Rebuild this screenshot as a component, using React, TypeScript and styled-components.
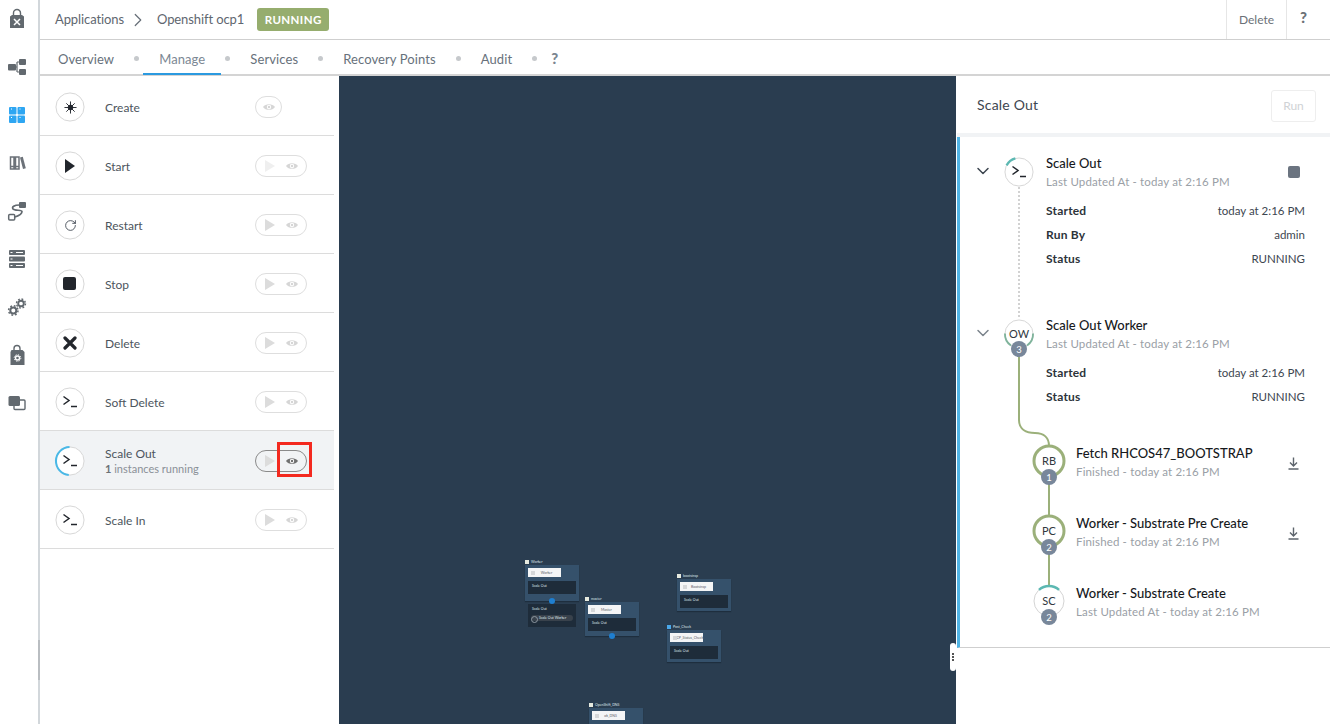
import React from 'react';
import styled, {createGlobalStyle} from 'styled-components';
import {ChevronDown, ChevronRight, RotateCw} from 'lucide-react';

const GlobalStyle = createGlobalStyle`
  html, body {
    margin: 0;
    height: 724px;
    overflow: hidden;
    background: #fff;
    font-family: Lato, "Open Sans", sans-serif;
    color: #3d4650;
  }
  * { box-sizing: border-box; }
`;

const arc = (r: number, from: number, to: number, c = 16) => {
    const pt = (a: number) => {
        const rad = ((a - 90) * Math.PI) / 180;
        return `${(c + r * Math.cos(rad)).toFixed(2)} ${(c + r * Math.sin(rad)).toFixed(2)}`;
    };
    return `M${pt(from)} A${r} ${r} 0 ${to - from > 180 ? 1 : 0} 1 ${pt(to)}`;
};

const Ring = ({arcs = [], color = '#5cb8b2', width = 2, full}: {arcs?: [number, number][]; color?: string; width?: number; full?: string}) => (
    <RingSvg viewBox="0 0 32 32">
        <circle cx="16" cy="16" r="15" fill="#fff" stroke={full || '#d4d4d4'} strokeWidth={full ? 3 : 1}/>
        {arcs.map(([a, b]) => <path key={a} d={arc(15, a, b)} fill="none" stroke={color} strokeWidth={width}/>)}
    </RingSvg>
);

const Terminal = () => (
    <svg width="16" height="14" viewBox="0 0 16 14" fill="none" stroke="#22262c" strokeWidth="1.5">
        <path d="M1.5 1.5 L7 5.5 L1.5 9.5"/>
        <path d="M9 11.5 H15"/>
    </svg>
);

const CreateIcon = () => (
    <svg width="13" height="13" viewBox="0 0 14 14" stroke="#22262c" strokeWidth="1" fill="#22262c">
        <circle cx="7" cy="7" r="2.6"/>
        <path d="M7 0.500v13M0.500 7h13M2.500 2.500l9 9M11.500 2.500l-9 9"/>
    </svg>
);

const PlayGlyph = () => <svg width="10" height="14" viewBox="0 0 10 14"><path d="M0 0 L10 7 L0 14Z" fill="#22262c"/></svg>;
const StopGlyph = () => <svg width="14" height="14" viewBox="0 0 14 14"><rect width="13" height="13" rx="2" fill="#22262c"/></svg>;
const CrossGlyph = () => (
    <svg width="14" height="14" viewBox="0 0 14 14" stroke="#22262c" strokeWidth="3.2" strokeLinecap="round">
        <path d="M2 2 L12 12 M12 2 L2 12"/>
    </svg>
);

const EyeGlyph = ({color}: {color: string}) => (
    <svg width="12" height="8" viewBox="0 0 12 8">
        <path d="M0 4 C2.5 0.2 9.5 0.2 12 4 C9.5 7.8 2.5 7.8 0 4Z" fill={color}/>
        <circle cx="6" cy="4" r="2.2" fill="#fff"/>
        <circle cx="6" cy="4" r="1.2" fill={color}/>
    </svg>
);

const navIcons = [
    <svg viewBox="0 0 24 24" key="bag"><path d="M8.500 9V6a3.500 3.500 0 0 1 7 0v3" fill="none" stroke="#62696f" strokeWidth="1.400"/><path d="M7 8h10l2 1.500V21H5V9.500z" fill="#62696f"/><path d="M9 12l6 6M15 12l-6 6" stroke="#fff" strokeWidth="1.500"/></svg>,
    <svg viewBox="0 0 24 24" key="tree"><path d="M8 12h4M12 7v10M12 7h4M12 17h4" stroke="#62696f" strokeWidth="1.200" fill="none"/><rect x="3" y="9" width="8" height="6.500" rx="1" fill="#62696f"/><rect x="14" y="4" width="7" height="6" rx="1" fill="#62696f"/><rect x="14" y="14" width="7" height="6" rx="1" fill="#62696f"/></svg>,
    <svg viewBox="0 0 24 24" key="apps"><rect x="4" y="4" width="7.500" height="7.500" rx="1" fill="#2ea6f2"/><rect x="12.500" y="4" width="7.500" height="7.500" rx="1" fill="#2ea6f2"/><rect x="4" y="12.500" width="7.500" height="7.500" rx="1" fill="#2ea6f2"/><rect x="12.500" y="12.500" width="7.500" height="7.500" rx="1" fill="#2ea6f2"/><path d="M6 6h1M14.500 6h1M6 14.500h1M14.500 14.500h1" stroke="#fff"/></svg>,
    <svg viewBox="0 0 24 24" key="lib"><path d="M5.500 6h3.500v12H5.500zM10.500 6h3.500v12h-3.500z" fill="none" stroke="#6c7279" strokeWidth="1.500"/><path d="M15 6.500l2.800-.8 3 11.500-2.800.8z" fill="#6c7279"/><path d="M5 15.500h9" stroke="#6c7279" strokeWidth="1.500"/></svg>,
    <svg viewBox="0 0 24 24" key="route"><rect x="14" y="3" width="7" height="6" rx="1" fill="#62696f"/><rect x="3.700" y="15.500" width="6" height="5.500" rx="1" fill="none" stroke="#62696f" strokeWidth="1.500"/><path d="M14.500 6C9 6 6.500 8 8 10C9.500 12 17 10.500 17 12.500C17 15 13 17 10 18" fill="none" stroke="#62696f" strokeWidth="1.700"/></svg>,
    <svg viewBox="0 0 24 24" key="server"><rect x="4" y="3" width="16" height="5" rx="1" fill="#62696f"/><rect x="4" y="9.500" width="16" height="5" rx="1" fill="#62696f"/><rect x="4" y="16" width="16" height="5" rx="1" fill="#62696f"/><path d="M5.500 5.500h2M5.500 12h2M5.500 18.500h2M11 5.500h7M11 18.500h7" stroke="#fff" strokeWidth="1"/></svg>,
    <svg viewBox="0 0 24 24" key="gears"><circle cx="8.300" cy="15.500" r="3" fill="none" stroke="#62696f" strokeWidth="2"/><circle cx="8.300" cy="15.500" r="4.700" fill="none" stroke="#62696f" strokeWidth="1.500" strokeDasharray="1.800 1.890"/><circle cx="16" cy="8.500" r="2.800" fill="none" stroke="#62696f" strokeWidth="1.900"/><circle cx="16" cy="8.500" r="4.500" fill="none" stroke="#62696f" strokeWidth="1.400" strokeDasharray="1.800 1.730"/></svg>,
    <svg viewBox="0 0 24 24" key="bagcog"><path d="M9 7V5.500a3 3 0 0 1 6 0V7" fill="none" stroke="#62696f" strokeWidth="1.400"/><path d="M6.500 7h11l2 2v13h-14V9z" fill="#62696f"/><circle cx="12.500" cy="15" r="2" fill="none" stroke="#fff" strokeWidth="1.400"/><circle cx="12.500" cy="15" r="3.300" fill="none" stroke="#fff" strokeWidth="1" strokeDasharray="1.300 1.290"/></svg>,
    <svg viewBox="0 0 24 24" key="win"><rect x="9" y="9" width="11" height="9.500" rx="1" fill="#fff" stroke="#62696f" strokeWidth="1.400"/><rect x="3.500" y="5" width="11.500" height="10" rx="1.500" fill="#62696f"/></svg>,
];

type Action = {
    name: string;
    icon: React.ReactNode;
    noPlay?: boolean;
    active?: boolean;
};

const actions: Action[] = [
    {name: 'Create', icon: <CreateIcon/>, noPlay: true},
    {name: 'Start', icon: <PlayGlyph/>},
    {name: 'Restart', icon: <RotateCw size={13} color="#3d4650" strokeWidth={1.600}/>},
    {name: 'Stop', icon: <StopGlyph/>},
    {name: 'Delete', icon: <CrossGlyph/>},
    {name: 'Soft Delete', icon: <Terminal/>},
    {name: 'Scale Out', icon: <Terminal/>, active: true},
    {name: 'Scale In', icon: <Terminal/>},
];

const tabs = ['Overview', 'Manage', 'Services', 'Recovery Points', 'Audit'];

const DownloadIcon = () => (
    <svg width="11" height="13" viewBox="0 0 11 13" fill="none" stroke="#5d646c" strokeWidth="1.400">
        <path d="M5.500 0.500V8.500M2 5.500l3.500 3.500 3.500-3.500M0.500 12h10"/>
    </svg>
);

const steps = [
    {code: 'RB', count: 1, title: 'Fetch RHCOS47_BOOTSTRAP', sub: 'Finished - today at 2:16 PM', done: true},
    {code: 'PC', count: 2, title: 'Worker - Substrate Pre Create', sub: 'Finished - today at 2:16 PM', done: true},
    {code: 'SC', count: 2, title: 'Worker - Substrate Create', sub: 'Last Updated At - today at 2:16 PM', done: false},
];

type CanvasNode = {
    x: number;
    y: number;
    label: string;
    head: string;
    blue?: boolean;
    height?: number;
    dot?: boolean;
    cut?: boolean;
};

const nodes: CanvasNode[] = [
    {x: 525, y: 558, label: 'Worker', head: 'Worker', dot: true, height: 36},
    {x: 585, y: 595, label: 'master', head: 'Master', dot: true, height: 34},
    {x: 677, y: 572, label: 'bootstrap', head: 'Bootstrap', height: 32},
    {x: 667, y: 623, label: 'Post_Check', head: 'OCP_Status_Check', blue: true, height: 32},
    {x: 589, y: 701, label: 'OpenShift_DNS', head: 'ok_DNS', height: 32, cut: true},
];

export default function App() {
    return (
        <Page>
            <GlobalStyle/>
            <Sidebar>
                {navIcons.map((icon, i) => <NavIcon key={i}>{icon}</NavIcon>)}
                <SideNotch/>
            </Sidebar>
            <Main>
                <TopBar>
                    <Crumb>Applications</Crumb>
                    <ChevronRight size={22} color="#666e77" strokeWidth={1.300}/>
                    <Crumb>Openshift ocp1</Crumb>
                    <StatusBadge>RUNNING</StatusBadge>
                    <TopAction>Delete</TopAction>
                    <HelpAction>?</HelpAction>
                </TopBar>
                <TabBar>
                    {tabs.map(tab => (
                        <React.Fragment key={tab}>
                            <Tab $active={tab === 'Manage'}>{tab}</Tab>
                            <TabDot/>
                        </React.Fragment>
                    ))}
                    <TabHelp>?</TabHelp>
                </TabBar>
                <Body>
                    <ActionList>
                        {actions.map(a => (
                            <ActionRow key={a.name} $active={a.active}>
                                <CircleIcon>
                                    <Ring arcs={a.active ? [[185, 358]] : []} color="#4ab8e6" width={2.200}/>
                                    <IconInner>{a.icon}</IconInner>
                                </CircleIcon>
                                <ActionText $twoLines={a.active}>
                                    <ActionName>{a.name}</ActionName>
                                    {a.active && <ActionSub><b>1</b> instances running</ActionSub>}
                                </ActionText>
                                <Pill $active={a.active} $short={a.noPlay}>
                                    {!a.noPlay && (
                                        <svg width="10" height="12" viewBox="0 0 10 12">
                                            <path d="M0 0 L10 6 L0 12Z" fill={a.name === 'Start' ? '#efefef' : '#dcdcdc'}/>
                                        </svg>
                                    )}
                                    <EyeGlyph color={a.active ? '#707070' : '#d6d6d6'}/>
                                    {a.active && <Highlight/>}
                                </Pill>
                            </ActionRow>
                        ))}
                    </ActionList>
                    <Canvas>
                        {nodes.map(n => (
                            <NodeWrap key={n.label} $x={n.x - 339} $y={n.y - 76}>
                                <NodeLabel>
                                    <NodeCheck $blue={n.blue}/>
                                    {n.label}
                                </NodeLabel>
                                <NodeBox $h={n.height || 32}>
                                    <NodeHead>{n.head}</NodeHead>
                                    <NodeDark>{!n.cut && 'Scale Out'}</NodeDark>
                                    {n.dot && <NodeDot/>}
                                </NodeBox>
                                {n.label === 'Worker' && (
                                    <NodeExtra>
                                        Scale Out
                                        <NodeTask>Scale Out Worker</NodeTask>
                                    </NodeExtra>
                                )}
                            </NodeWrap>
                        ))}
                    </Canvas>
                    <RightPanel>
                        <Grip>
                            <i/><i/><i/>
                        </Grip>
                        <PanelHead>
                            <PanelTitle>Scale Out</PanelTitle>
                            <RunButton>Run</RunButton>
                        </PanelHead>
                        <Timeline>
                            <Connectors width="370" height="510" fill="none">
                                <path d="M59 50V181" stroke="#c4c4c4" strokeWidth="1.500" strokeDasharray="2 2"/>
                                <path d="M59 218V283C59 292 66 296 75 296C84 296 89 301 89 309V455" stroke="#9bb07a" strokeWidth="2"/>
                            </Connectors>
                            <Stage>
                                <StageHead>
                                    <Caret><ChevronDown size={20} color="#3d4650" strokeWidth={1.800}/></Caret>
                                    <StageCircle>
                                        <Ring arcs={[[298, 345]]} width={2.500}/>
                                        <IconInner><Terminal/></IconInner>
                                    </StageCircle>
                                    <StageText>
                                        <StageTitle>Scale Out</StageTitle>
                                        <StageSub>Last Updated At - today at 2:16 PM</StageSub>
                                    </StageText>
                                    <StopButton/>
                                </StageHead>
                                <Details>
                                    <DetailRow><b>Started</b><span>today at 2:16 PM</span></DetailRow>
                                    <DetailRow><b>Run By</b><span>admin</span></DetailRow>
                                    <DetailRow><b>Status</b><span>RUNNING</span></DetailRow>
                                </Details>
                            </Stage>
                            <Stage>
                                <StageHead>
                                    <Caret><ChevronDown size={20} color="#7c848c" strokeWidth={1.800}/></Caret>
                                    <StageCircle>
                                        <Ring arcs={[[215, 272], [88, 145]]} color="#7fb39b"/>
                                        <IconInner><Code>OW</Code></IconInner>
                                        <CountBadge>3</CountBadge>
                                    </StageCircle>
                                    <StageText>
                                        <StageTitle>Scale Out Worker</StageTitle>
                                        <StageSub>Last Updated At - today at 2:16 PM</StageSub>
                                    </StageText>
                                </StageHead>
                                <Details>
                                    <DetailRow><b>Started</b><span>today at 2:16 PM</span></DetailRow>
                                    <DetailRow><b>Status</b><span>RUNNING</span></DetailRow>
                                </Details>
                            </Stage>
                            <Steps>
                                {steps.map(s => (
                                    <Step key={s.code}>
                                        <StepCircle>
                                            {s.done ? <Ring full="#9bb07a"/> : <Ring arcs={[[318, 402]]} width={2.500}/>}
                                            <IconInner><Code>{s.code}</Code></IconInner>
                                            <CountBadge>{s.count}</CountBadge>
                                        </StepCircle>
                                        <StageText>
                                            <StageTitle>{s.title}</StageTitle>
                                            <StageSub>{s.sub}</StageSub>
                                        </StageText>
                                        {s.done && <StepDownload><DownloadIcon/></StepDownload>}
                                    </Step>
                                ))}
                            </Steps>
                        </Timeline>
                    </RightPanel>
                </Body>
            </Main>
        </Page>
    );
}

const Page = styled.div`
  display: flex;
  width: 1330px;
  height: 724px;
  overflow: hidden;
`;

const Sidebar = styled.nav`
  position: relative;
  flex: 0 0 40px;
  display: flex;
  flex-direction: column;
  gap: 24px;
  padding: 7px 0 0 5px;
  border-right: 2px solid #d2d7db;
`;

const NavIcon = styled.div`
  width: 24px;
  height: 24px;
  svg {
    display: block;
    width: 24px;
    height: 24px;
  }
`;

const SideNotch = styled.span`
  position: absolute;
  top: 640px;
  right: -2px;
  width: 2px;
  height: 40px;
  background: #b9bdc1;
`;

const Main = styled.div`
  flex: 1;
  min-width: 0;
  display: flex;
  flex-direction: column;
`;

const TopBar = styled.header`
  height: 40px;
  display: flex;
  align-items: center;
  padding-left: 15px;
  border-bottom: 1px solid #cfcfcf;
  svg {
    margin: 0 8px 0 3px;
  }
`;

const Crumb = styled.span`
  font-size: 13px;
  letter-spacing: -0.100px;
  color: #5f6770;
  padding-bottom: 1px;
`;

const StatusBadge = styled.span`
  margin-left: 13px;
  width: 72px;
  height: 23px;
  display: flex;
  align-items: center;
  justify-content: center;
  background: #96ad6e;
  border-radius: 3px;
  color: #fff;
  font-size: 11.500px;
  font-weight: 700;
  letter-spacing: 0.400px;
`;

const TopAction = styled.span`
  margin-left: auto;
  width: 60px;
  height: 39px;
  display: flex;
  align-items: center;
  justify-content: center;
  border-left: 1px solid #e6e6e6;
  font-size: 12px;
  color: #6b7177;
`;

const HelpAction = styled.span`
  width: 44px;
  height: 39px;
  display: flex;
  align-items: center;
  justify-content: center;
  border-left: 1px solid #e6e6e6;
  font-size: 15px;
  font-weight: 900;
  color: #6b7177;
  padding: 0 10px 5px 0;
`;

const TabBar = styled.div`
  height: 36px;
  display: flex;
  align-items: center;
  border-bottom: 2px solid #d4d4d4;
  padding-left: 2px;
`;

const Tab = styled.span<{$active?: boolean}>`
  position: relative;
  height: 34px;
  display: flex;
  align-items: center;
  padding: 3px 16px 0;
  font-size: 13px;
  letter-spacing: 0.100px;
  color: ${p => (p.$active ? '#7c8894' : '#67717b')};
  ${p => p.$active && `
    &::after {
      content: '';
      position: absolute;
      left: 0;
      right: 0;
      bottom: -1px;
      height: 2px;
      background: #2b9ae0;
    }
  `}
`;

const TabDot = styled.i`
  width: 5px;
  height: 5px;
  margin: 2px 4px 0;
  border-radius: 50%;
  background: #c6c9cc;
`;

const TabHelp = styled.span`
  margin-left: 10px;
  padding-top: 1px;
  font-size: 15px;
  font-weight: 900;
  color: #7b8590;
`;

const Body = styled.div`
  flex: 1;
  min-height: 0;
  display: flex;
`;

const ActionList = styled.div`
  flex: 0 0 299px;
  padding: 1px 5px 0 0;
`;

const ActionRow = styled.div<{$active?: boolean}>`
  height: 59px;
  display: flex;
  align-items: center;
  padding: 2px 0 0 15px;
  border-bottom: 1px solid #dcdcdc;
  background: ${p => (p.$active ? '#f1f3f5' : '#fff')};
`;

const CircleIcon = styled.div`
  position: relative;
  flex: 0 0 30px;
  height: 30px;
`;

const RingSvg = styled.svg`
  position: absolute;
  inset: 0;
  width: 100%;
  height: 100%;
  overflow: visible;
`;

const IconInner = styled.div`
  position: absolute;
  inset: 0;
  display: flex;
  align-items: center;
  justify-content: center;
`;

const ActionText = styled.div<{$twoLines?: boolean}>`
  flex: 0 0 150px;
  margin: ${p => (p.$twoLines ? '-1px' : '0')} 0 0 20px;
  padding-top: ${p => (p.$twoLines ? '0' : '1px')};
`;

const ActionName = styled.div`
  font-size: 12px;
  line-height: 15px;
  color: #4d555d;
`;

const ActionSub = styled.div`
  font-size: 11px;
  line-height: 15px;
  color: #8a9097;
  b {
    color: #6b7177;
  }
`;

const Pill = styled.div<{$active?: boolean; $short?: boolean}>`
  position: relative;
  width: ${p => (p.$short ? '27px' : '52px')};
  height: 22px;
  display: flex;
  align-items: center;
  justify-content: ${p => (p.$short ? 'center' : 'space-between')};
  padding: 0 ${p => (p.$short ? '0' : '8px')} 0 ${p => (p.$short ? '0' : '9px')};
  border: 1px solid ${p => (p.$active ? '#8a8a8a' : '#dedede')};
  border-radius: 11px;
`;

const Highlight = styled.span`
  position: absolute;
  left: 21px;
  top: -9px;
  width: 35px;
  height: 35px;
  border: 3px solid #f3291f;
`;

const Canvas = styled.div`
  position: relative;
  flex: 0 0 617px;
  overflow: hidden;
  background: #2a3d50;
`;

const NodeWrap = styled.div<{$x: number; $y: number}>`
  position: absolute;
  left: ${p => p.$x}px;
  top: ${p => p.$y}px;
  width: 54px;
  font-size: 3.500px;
  color: #dfe5ea;
`;

const NodeLabel = styled.div`
  display: flex;
  align-items: center;
  gap: 2px;
  height: 7px;
`;

const NodeCheck = styled.i<{$blue?: boolean}>`
  width: 4px;
  height: 4px;
  background: ${p => (p.$blue ? '#4aa8ea' : '#e6eadf')};
`;

const NodeBox = styled.div<{$h: number}>`
  position: relative;
  height: ${p => p.$h}px;
  padding: 3px;
  background: #35516b;
  box-shadow: 0 1px 1px rgba(10, 20, 30, 0.35);
`;

const NodeHead = styled.div`
  position: relative;
  width: 33px;
  height: 9px;
  display: flex;
  align-items: center;
  justify-content: center;
  padding-left: 4px;
  background: #f4f5f6;
  color: #5a6168;
  &::before {
    content: '';
    position: absolute;
    left: 3px;
    top: 2.500px;
    width: 4px;
    height: 4px;
    background: #d5d7d9;
  }
`;

const NodeDark = styled.div`
  height: 13px;
  margin-top: 4px;
  padding: 3px 4px;
  background: #1e2c3a;
`;

const NodeDot = styled.i`
  position: absolute;
  left: 24px;
  bottom: -3px;
  width: 6px;
  height: 6px;
  border-radius: 50%;
  background: #1f7fd0;
`;

const NodeExtra = styled.div`
  width: 48px;
  height: 23px;
  margin: 3px 0 0 3px;
  padding: 3px 4px;
  background: #1e2c3a;
`;

const NodeTask = styled.div`
  position: relative;
  width: 42px;
  margin: 4px 0 0 -1px;
  height: 6px;
  padding-left: 8px;
  line-height: 6px;
  border-radius: 3px;
  background: #39424c;
  &::before {
    content: '';
    position: absolute;
    left: 0;
    top: 0.500px;
    width: 5px;
    height: 5px;
    border: 1px solid #8f99a2;
    border-radius: 50%;
  }
`;

const RightPanel = styled.aside`
  position: relative;
  flex: 1;
  min-width: 0;
  border-left: 1px solid #fff;
`;

const Grip = styled.div`
  position: absolute;
  left: -7px;
  top: 567px;
  width: 6px;
  height: 28px;
  display: flex;
  flex-direction: column;
  align-items: center;
  justify-content: center;
  gap: 1px;
  border-radius: 3px;
  background: #fff;
  i {
    width: 2px;
    height: 2px;
    background: #555;
  }
`;

const PanelHead = styled.div`
  height: 57px;
  display: flex;
  align-items: center;
  justify-content: space-between;
  padding: 2px 14px 0 20px;
`;

const PanelTitle = styled.span`
  margin-bottom: 2px;
  font-size: 14px;
  letter-spacing: 0.200px;
  color: #3d4650;
`;

const RunButton = styled.span`
  width: 45px;
  height: 32px;
  display: flex;
  align-items: center;
  justify-content: center;
  border: 1px solid #eeeeee;
  border-radius: 3px;
  font-size: 12px;
  color: #cfd2d5;
`;

const Timeline = styled.div`
  position: relative;
  height: 511px;
  margin-top: 4px;
  padding-top: 18px;
  border-left: 3px solid #4fb3e4;
  border-bottom: 1px solid #cfcfcf;
  &::before {
    content: '';
    position: absolute;
    left: -3px;
    right: 0;
    top: -4px;
    height: 4px;
    background: #f1f3f5;
  }
`;

const Connectors = styled.svg`
  position: absolute;
  left: 0;
  top: 0;
`;

const Stage = styled.div`
  position: relative;
  height: 162px;
  padding: 0 25px 0 16px;
  &:nth-of-type(2) {
    height: 128px;
  }
`;

const StageHead = styled.div`
  position: relative;
  display: flex;
  align-items: flex-start;
`;

const Caret = styled.span`
  flex: 0 0 28px;
  margin-left: -3px;
  margin-right: 3px;
  padding-top: 6px;
  svg {
    display: block;
  }
`;

const StageCircle = styled.div`
  position: relative;
  flex: 0 0 30px;
  height: 30px;
  margin: 2px 12px 0 0;
`;

const Code = styled.span`
  display: block;
  padding-bottom: 1px;
  font-size: 11px;
  color: #30373e;
`;

const CountBadge = styled.span`
  position: absolute;
  left: 50%;
  bottom: -8px;
  width: 16px;
  height: 16px;
  margin-left: -8px;
  display: flex;
  align-items: center;
  justify-content: center;
  border-radius: 50%;
  background: #78879a;
  color: #fff;
  font-size: 9.500px;
`;

const StageText = styled.div`
  flex: 1;
  min-width: 0;
`;

const StageTitle = styled.div`
  font-size: 13px;
  line-height: 16px;
  font-weight: 500;
  color: #16191c;
`;

const StageSub = styled.div`
  margin-top: 3px;
  font-size: 11.500px;
  line-height: 16px;
  letter-spacing: 0.150px;
  color: #9aa0a6;
`;

const StopButton = styled.span`
  position: absolute;
  right: 5px;
  top: 11px;
  width: 12px;
  height: 12px;
  border-radius: 2px;
  background: #6b7480;
`;

const Details = styled.div`
  margin: 8px 0 0 70px;
`;

const DetailRow = styled.div`
  height: 24px;
  display: flex;
  align-items: center;
  justify-content: space-between;
  font-size: 11.500px;
  color: #3d4650;
  b {
    font-size: 12px;
    font-weight: 700;
    letter-spacing: 0.200px;
    color: #2c333a;
  }
`;

const Steps = styled.div`
  position: relative;
  padding-left: 73px;
`;

const Step = styled.div`
  height: 70px;
  display: flex;
  align-items: flex-start;
`;

const StepCircle = styled.div`
  position: relative;
  flex: 0 0 32px;
  height: 32px;
  margin-right: 11px;
`;

const StepDownload = styled.span`
  flex: 0 0 auto;
  margin: 9px 31px 0 0;
`;
